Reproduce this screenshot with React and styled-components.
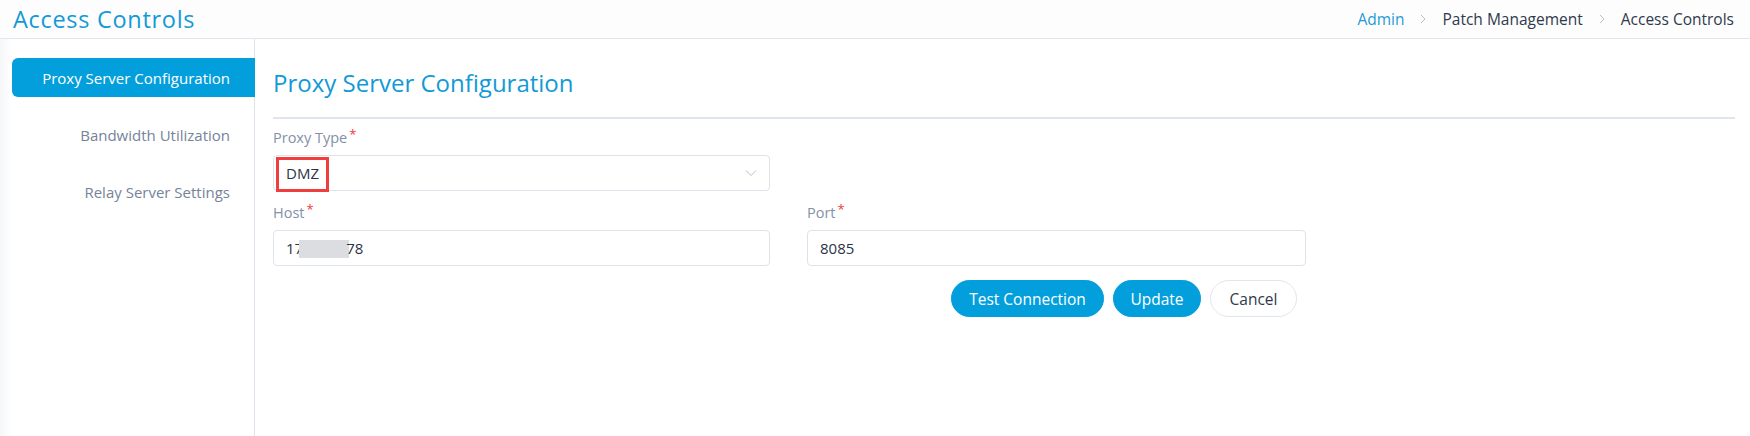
import React from 'react'
import styled, { createGlobalStyle } from 'styled-components'

const GlobalStyle = createGlobalStyle`
  html, body {
    margin: 0;
    padding: 0;
    background: #ffffff;
    font-family: 'Open Sans', 'Liberation Sans', sans-serif;
  }
  * { box-sizing: border-box; }
`

const Page = styled.div`
  width: 1750px;
  height: 436px;
  display: flex;
  flex-direction: column;
  background: #fff;
  overflow: hidden;
`

const Header = styled.header`
  height: 39px;
  flex-shrink: 0;
  display: flex;
  align-items: center;
  justify-content: space-between;
  padding: 0 16px 0 13px;
  border-bottom: 1px solid #e2e7ee;
  background: #fdfdfd;
`

const Title = styled.h1`
  margin: 0;
  font-size: 23.5px;
  font-weight: 500;
  color: #129ad6;
  letter-spacing: 0.7px;
`

const Crumbs = styled.nav`
  display: flex;
  align-items: center;
  gap: 13px;
  font-size: 15.5px;
  color: #2f3a4c;
`

const Crumb = styled.span`
  color: ${p => (p.$link ? '#1e9ad6' : '#2f3a4c')};
`

const Body = styled.div`
  flex: 1;
  display: flex;
`

const Sidebar = styled.aside`
  width: 255px;
  flex-shrink: 0;
  border-right: 1px solid #dfe4ec;
  padding: 19px 0 0 12px;
  display: flex;
  flex-direction: column;
  gap: 18px;
  background: linear-gradient(to right, #f6f7f9 0, #ffffff 12px);
`

const NavItem = styled.div`
  height: 39px;
  display: flex;
  align-items: center;
  justify-content: flex-end;
  padding-right: 25px;
  font-size: 15px;
  border-radius: 6px 0 0 6px;
  color: ${p => (p.$active ? '#ffffff' : '#76839a')};
  background: ${p => (p.$active ? '#039fdc' : 'transparent')};
  margin-right: -1px;
`

const Content = styled.main`
  flex: 1;
  padding: 27px 15px 0 18px;
`

const SectionTitle = styled.h2`
  margin: 0;
  height: 34px;
  font-size: 24px;
  font-weight: 500;
  color: #129ad6;
  line-height: 34px;
`

const Divider = styled.hr`
  margin: 17px 0 0 0;
  border: none;
  height: 2px;
  background: #dfe4ee;
`

const Form = styled.div`
  padding-top: 9px;
  display: grid;
  grid-template-columns: 497px 499px;
  column-gap: 37px;
  row-gap: 12px;
`

const Field = styled.div`
  display: flex;
  flex-direction: column;
  gap: 7px;
`

const Label = styled.label`
  font-size: 14.5px;
  color: #8391a7;
  line-height: 20px;
  height: 20px;
`

const Star = styled.sup`
  color: #ef3b3b;
  font-size: 13px;
  margin-left: 2px;
  vertical-align: 4px;
  line-height: 0;
`

const Box = styled.div`
  position: relative;
  height: 36px;
  border: 1px solid #dde3ea;
  border-radius: 4px;
  display: flex;
  align-items: center;
  justify-content: space-between;
  padding: 0 12px 0 12px;
  font-size: 15px;
  color: #2c3547;
  background: #fff;
`

const Highlight = styled.div`
  position: absolute;
  left: 2px;
  top: 1px;
  width: 53px;
  height: 35px;
  border: 3px solid #f03e3e;
`

const Masked = styled.span`
  display: inline-block;
  width: 50px;
  height: 18px;
  background: #dcdde0;
  vertical-align: middle;
  margin: 0 -3px 0 -4px;
`

const Actions = styled.div`
  grid-column: 1 / 3;
  display: flex;
  justify-content: flex-end;
  gap: 9px;
  padding-right: 9px;
  margin-top: 2px;
`

const Button = styled.button`
  height: 37px;
  width: ${p => p.$w}px;
  padding: 0;
  border-radius: 19px;
  font-family: inherit;
  font-size: 15.5px;
  cursor: pointer;
  border: 1px solid ${p => (p.$primary ? '#039fdc' : '#e1e6ee')};
  background: ${p => (p.$primary ? '#039fdc' : '#ffffff')};
  color: ${p => (p.$primary ? '#ffffff' : '#2f3a4c')};
`

const Chevron = ({ size = 12, color = '#b5bfcd' }) => (
  <svg width={size} height={size} viewBox="0 0 12 12" fill="none">
    <path d="M4 2l4 4-4 4" stroke={color} strokeWidth="1" />
  </svg>
)

const Down = () => (
  <svg width="12" height="8" viewBox="0 0 12 8" fill="none">
    <path d="M1 1.5l5 5 5-5" stroke="#b5bfcd" strokeWidth="1" />
  </svg>
)

export default function App() {
  return (
    <Page>
      <GlobalStyle />
      <Header>
        <Title>Access Controls</Title>
        <Crumbs>
          <Crumb $link>Admin</Crumb>
          <Chevron />
          <Crumb>Patch Management</Crumb>
          <Chevron />
          <Crumb>Access Controls</Crumb>
        </Crumbs>
      </Header>
      <Body>
        <Sidebar>
          <NavItem $active>Proxy Server Configuration</NavItem>
          <NavItem>Bandwidth Utilization</NavItem>
          <NavItem>Relay Server Settings</NavItem>
        </Sidebar>
        <Content>
          <SectionTitle>Proxy Server Configuration</SectionTitle>
          <Divider />
          <Form>
            <Field>
              <Label>Proxy Type<Star>*</Star></Label>
              <Box>
                <span>DMZ</span>
                <Down />
                <Highlight />
              </Box>
            </Field>
            <div />
            <Field>
              <Label>Host<Star>*</Star></Label>
              <Box>
                <span>17<Masked />78</span>
              </Box>
            </Field>
            <Field>
              <Label>Port<Star>*</Star></Label>
              <Box>
                <span>8085</span>
              </Box>
            </Field>
            <Actions>
              <Button $primary $w={153}>Test Connection</Button>
              <Button $primary $w={88}>Update</Button>
              <Button $w={87}>Cancel</Button>
            </Actions>
          </Form>
        </Content>
      </Body>
    </Page>
  )
}
